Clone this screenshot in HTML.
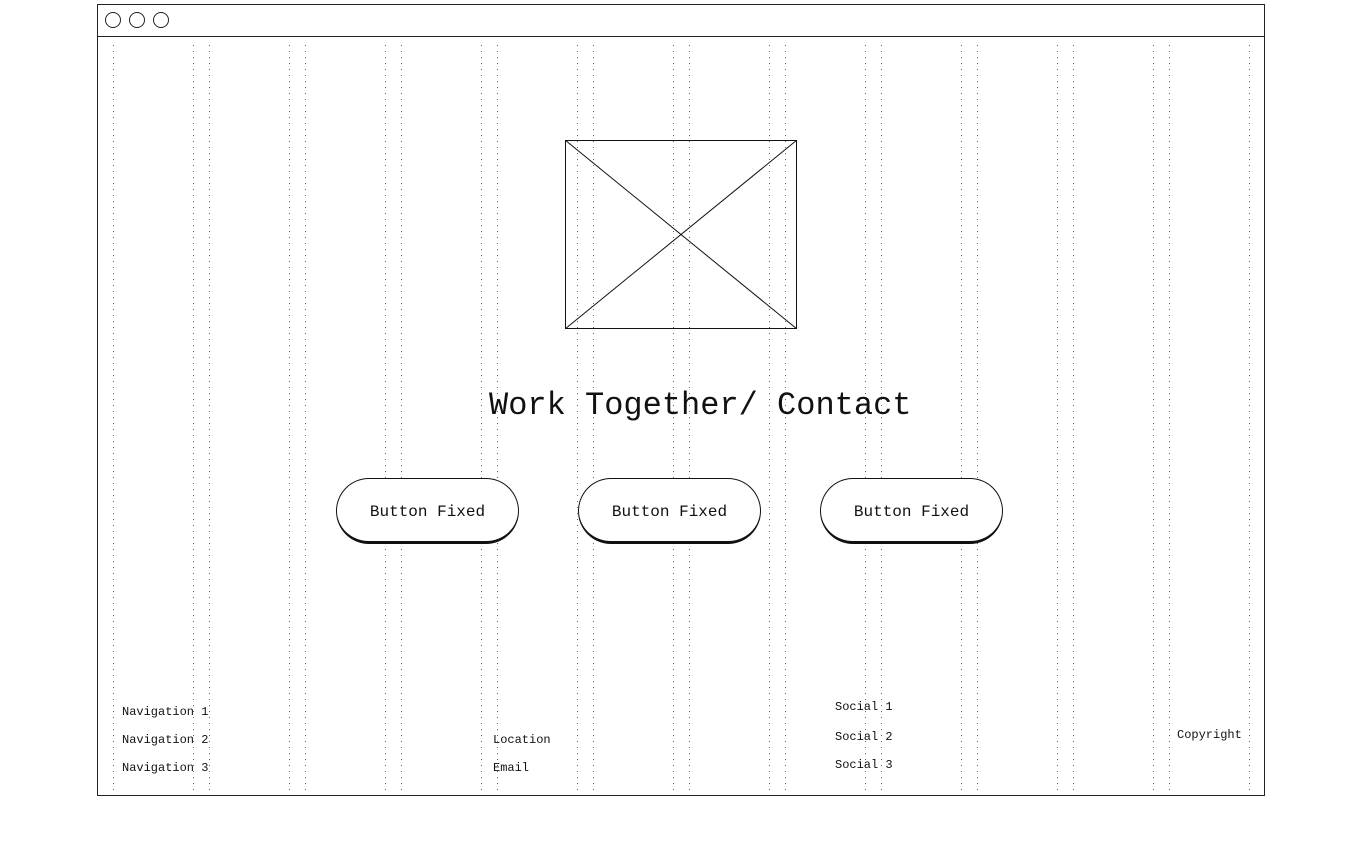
<!DOCTYPE html>
<html><head><style>
body{margin:0;width:1360px;height:868px;background:#fff;position:relative;font-family:"Liberation Mono",monospace;color:#111;overflow:hidden}
.frame{position:absolute;left:97px;top:4px;width:1166px;height:790px;border:1px solid #222}
.bar{position:absolute;left:97px;top:36px;width:1168px;height:1px;background:#222}
.c{position:absolute;top:12px;width:14px;height:14px;border:1px solid #222;border-radius:50%}
.d{position:absolute;top:45px;width:1px;height:745px;background:repeating-linear-gradient(to bottom,#666 0 1px,transparent 1px 6px)}
.btn{position:absolute;top:478px;width:181px;height:62px;border:1px solid #111;border-bottom-width:3px;border-radius:33px;background:#fff;font-size:16px;text-align:center;line-height:66px}
.t{position:absolute;font-size:12px;line-height:14px;background:transparent}
</style></head><body>
<div class="frame"></div><div class="bar"></div>
<div class="c" style="left:105px"></div><div class="c" style="left:129px"></div><div class="c" style="left:153px"></div>
<div class="d" style="left:113px"></div>
<div class="d" style="left:193px"></div><div class="d" style="left:209px"></div>
<div class="d" style="left:289px"></div><div class="d" style="left:305px"></div>
<div class="d" style="left:385px"></div><div class="d" style="left:401px"></div>
<div class="d" style="left:481px"></div><div class="d" style="left:497px"></div>
<div class="d" style="left:577px"></div><div class="d" style="left:593px"></div>
<div class="d" style="left:673px"></div><div class="d" style="left:689px"></div>
<div class="d" style="left:769px"></div><div class="d" style="left:785px"></div>
<div class="d" style="left:865px"></div><div class="d" style="left:881px"></div>
<div class="d" style="left:961px"></div><div class="d" style="left:977px"></div>
<div class="d" style="left:1057px"></div><div class="d" style="left:1073px"></div>
<div class="d" style="left:1153px"></div><div class="d" style="left:1169px"></div>
<div class="d" style="left:1249px"></div>
<svg style="position:absolute;left:565px;top:140px" width="232" height="189"><rect x="0.5" y="0.5" width="231" height="188" fill="none" stroke="#111"/><line x1="0" y1="0" x2="232" y2="189" stroke="#111"/><line x1="232" y1="0" x2="0" y2="189" stroke="#111"/></svg>
<div style="position:absolute;left:489px;top:386px;font-size:32px;line-height:40px;white-space:nowrap">Work Together/ Contact</div>
<div class="btn" style="left:336px">Button Fixed</div>
<div class="btn" style="left:578px">Button Fixed</div>
<div class="btn" style="left:820px">Button Fixed</div>
<div class="t" style="left:122px;top:705px">Navigation 1</div>
<div class="t" style="left:122px;top:733px">Navigation 2</div>
<div class="t" style="left:122px;top:761px">Navigation 3</div>
<div class="t" style="left:493px;top:733px">Location</div>
<div class="t" style="left:493px;top:761px">Email</div>
<div class="t" style="left:835px;top:700px">Social 1</div>
<div class="t" style="left:835px;top:730px">Social 2</div>
<div class="t" style="left:835px;top:758px">Social 3</div>
<div class="t" style="left:1177px;top:728px">Copyright</div>
</body></html>
